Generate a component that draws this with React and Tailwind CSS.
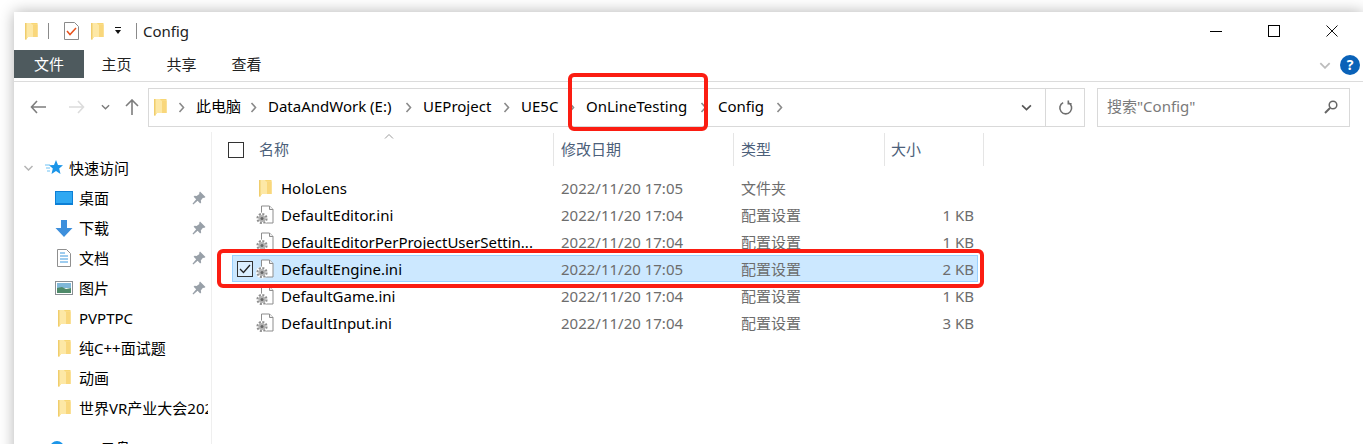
const FONT = "font-['Noto_Sans','Noto_Sans_CJK_SC',sans-serif]";

function Folder({ className = "w-[13px] h-[18px]" }) {
  return (
    <svg viewBox="0 0 13 18" className={`${className} shrink-0`}>
      <path d="M0 1h12.500v14H3l-2 2.500L0 17z" fill="#f8d775" />
      <path d="M0 1h6l1 1.500h5.500V15H3l-2 2.500-1-.5z" fill="#fde8a6" />
      <path d="M8 2.500h4.500V15H8z" fill="#f9d77c" />
      <path d="M0 1h1.500v16.500H0z" fill="#f0cd6c" />
    </svg>
  );
}

function ConfigFile() {
  return (
    <svg viewBox="0 0 18 20" className="w-[18px] h-[20px] shrink-0">
      <path d="M5.500 1h8l3.500 3.500V18H5.500z" fill="#fff" stroke="#8d8d8d" />
      <path d="M13.500 1v3.500H17" fill="#eee" stroke="#8d8d8d" />
      <circle cx="6" cy="13.500" r="6" fill="#fff" />
      <circle cx="6" cy="13.500" r="4.500" fill="none" stroke="#8f8f8f" strokeWidth="2.200" strokeDasharray="2 1.500" />
      <circle cx="6" cy="13.500" r="3.600" fill="#b2b2b2" />
      <circle cx="6" cy="13.500" r="1.500" fill="#666" />
    </svg>
  );
}

function Pin() {
  return (
    <svg viewBox="0 0 14 14" className="w-[14px] h-[14px] ml-auto mr-[5px] shrink-0">
      <path d="M8 .5L13.500 6l-1.500 1-1-.3-2.200 2.800.4 2-1 1-2.600-2.700L1.300 13.500.5 12.700l3.700-4.400L1.600 5.700l1-1 2 .4 2.800-2.200-.3-1z" fill="#98a0a8" />
    </svg>
  );
}

function Chevron({ className = "w-[7px] h-[11px]" }) {
  return (
    <svg viewBox="0 0 7 11" className={`${className} shrink-0`}>
      <path d="M1.500 1l4 4.500-4 4.500" fill="none" stroke="#8a8a8a" strokeWidth="1.600" />
    </svg>
  );
}

function Down({ className = "w-[10px] h-[6px]", color = "#7a7a7a" }) {
  return (
    <svg viewBox="0 0 10 6" className={`${className} shrink-0`}>
      <path d="M1 1l4 4 4-4" fill="none" stroke={color} strokeWidth="1.500" />
    </svg>
  );
}

function DesktopIcon() {
  return (
    <svg viewBox="0 0 18 14" className="w-[18px] h-[14px]">
      <rect x="0" y="0" width="18" height="14" fill="#0c7fd6" />
      <rect x="1" y="1" width="16" height="11" fill="#2fa8f2" />
    </svg>
  );
}

function DownloadIcon() {
  return (
    <svg viewBox="0 0 18 17" className="w-[18px] h-[17px]">
      <path d="M6 0h6v8h5.500L9 17 .5 8H6z" fill="#3d8fdc" />
    </svg>
  );
}

function DocIcon() {
  return (
    <svg viewBox="0 0 14 18" className="w-[14px] h-[18px]">
      <path d="M.5.500h9l4 4v13H.5z" fill="#fff" stroke="#8f8f8f" />
      <path d="M3 4h5M3 7h8M3 10h8M3 13h8" stroke="#3d9ae0" strokeWidth="1.200" />
    </svg>
  );
}

function PictureIcon() {
  return (
    <svg viewBox="0 0 18 14" className="w-[18px] h-[14px]">
      <rect x=".5" y=".5" width="17" height="13" fill="#fff" stroke="#8a8f94" />
      <rect x="2" y="2" width="14" height="5" fill="#7fb7d8" />
      <path d="M2 12V7l5-1 4 2 5-1v5z" fill="#4f8a6a" />
    </svg>
  );
}

function StarIcon() {
  return (
    <svg viewBox="0 0 18 16" className="w-[18px] h-[16px]">
      <path d="M11 0l2 5 5 .3-3.800 3.300 1.300 5.400L11 11l-4.500 3 1.300-5.400L4 5.300 9 5z" fill="#1b95e8" />
      <path d="M0 5h5M1 8h4M2 11h3" stroke="#6cc2f5" strokeWidth="1" />
    </svg>
  );
}

const quickLinks = [
  { label: "桌面", icon: <DesktopIcon />, pin: true },
  { label: "下载", icon: <DownloadIcon />, pin: true },
  { label: "文档", icon: <DocIcon />, pin: true },
  { label: "图片", icon: <PictureIcon />, pin: true },
  { label: "PVPTPC", icon: <Folder /> },
  { label: "纯C++面试题", icon: <Folder /> },
  { label: "动画", icon: <Folder /> },
  { label: "世界VR产业大会2022", icon: <Folder /> },
];

const files = [
  { name: "HoloLens", date: "2022/11/20 17:05", type: "文件夹", size: "", folder: true },
  { name: "DefaultEditor.ini", date: "2022/11/20 17:04", type: "配置设置", size: "1 KB" },
  { name: "DefaultEditorPerProjectUserSettin...", date: "2022/11/20 17:04", type: "配置设置", size: "1 KB" },
  { name: "DefaultEngine.ini", date: "2022/11/20 17:05", type: "配置设置", size: "2 KB", selected: true },
  { name: "DefaultGame.ini", date: "2022/11/20 17:04", type: "配置设置", size: "1 KB" },
  { name: "DefaultInput.ini", date: "2022/11/20 17:04", type: "配置设置", size: "3 KB" },
];

// cell widths keep the crumbs where the wider system font put them
const crumbs = [
  { label: "此电脑", width: "w-[72px]" },
  { label: "DataAndWork (E:)", width: "w-[155px]" },
  { label: "UEProject", width: "w-[98px]" },
  { label: "UE5C", width: "w-[65px]" },
  { label: "OnLineTesting", width: "w-[132px]" },
  { label: "Config", width: "w-[76px]" },
];

function Sidebar() {
  return (
    <div className="w-[198px] h-full shrink-0 border-r border-[#efefef] overflow-hidden">
      <div className="flex items-center h-[30px] mt-[21px] pl-[9px]">
        <Down className="w-[11px] h-[6px]" color="#b5b5b5" />
        <div className="ml-[11px] mr-[6px] flex"><StarIcon /></div>
        <span className="leading-normal">快速访问</span>
      </div>
      {quickLinks.map((item) => (
        <div key={item.label} className="flex items-center h-[30px]">
          <div className="w-[18px] ml-[41px] mr-[6px] flex justify-center shrink-0">{item.icon}</div>
          <span className="leading-normal whitespace-nowrap overflow-hidden max-w-[129px]">{item.label}</span>
          {item.pin && <Pin />}
        </div>
      ))}
      <div className="flex items-center h-[30px] mt-[10px] pl-[36px]">
        <div className="w-[14px] h-[14px] rounded-full bg-[#1b95e8] mr-[5px]" />
        <span className="leading-normal">WPS云盘</span>
      </div>
    </div>
  );
}

function HeaderCell({ className, children }) {
  return (
    <div className={`${className} h-[33px] shrink-0 border-r border-[#e5e5e5] flex items-center text-[#4c607a]`}>
      {children}
    </div>
  );
}

function FileRow({ file }) {
  const rowStyle = file.selected ? "bg-[#cce8ff] border-[#99d1ff]" : "border-transparent";
  return (
    <div className={`flex items-center h-[27px] w-[746px] border ${rowStyle}`}>
      <div className="w-[23px] flex justify-end shrink-0">
        {file.selected && (
          <div className="w-[16px] h-[16px] border border-[#333] bg-white/30 flex items-center justify-center mr-[3px]">
            <svg viewBox="0 0 12 10" className="w-[12px] h-[10px]">
              <path d="M1 5l3.500 3.500L11 1" fill="none" stroke="#222" strokeWidth="1.300" />
            </svg>
          </div>
        )}
      </div>
      <div className="w-[18px] flex justify-center shrink-0">
        {file.folder ? <Folder /> : <ConfigFile />}
      </div>
      <div className="w-[287px] pl-[7px] pt-[2px] shrink-0 whitespace-nowrap">{file.name}</div>
      <div className="w-[180px] pt-[2px] shrink-0 text-[#6d6d6d]">{file.date}</div>
      <div className="w-[150px] pt-[2px] shrink-0 text-[#6d6d6d]">{file.type}</div>
      <div className="w-[83px] pt-[2px] shrink-0 text-right text-[#6d6d6d]">{file.size}</div>
    </div>
  );
}

export default function App() {
  return (
    <div className={`${FONT} w-[1363px] h-[444px] overflow-hidden bg-white pl-[14px] pt-[12px] text-[15px] leading-none text-black`}>
      <div className="relative w-[1349px] h-[500px] bg-white shadow-[0_0_14px_rgba(0,0,0,0.3)]">
        {/* title bar */}
        <div className="flex items-center h-[38px] pl-[11px]">
          <Folder />
          <div className="w-px h-[16px] bg-[#8a8a8a] ml-[10px] mr-[15px]" />
          <svg viewBox="0 0 15 18" className="w-[15px] h-[18px]">
            <path d="M.5.500h10l4 4v13H.5z" fill="#fff" stroke="#8a8a8a" />
            <path d="M3 9l3 3.500L12 6" fill="none" stroke="#e8521c" strokeWidth="1.500" />
          </svg>
          <div className="ml-[12px]"><Folder /></div>
          <svg viewBox="0 0 8 8" className="w-[8px] h-[8px] ml-[10px]">
            <path d="M1 0h6v1H1zM1 3h6L4 7z" fill="#111" />
          </svg>
          <div className="w-px h-[16px] bg-[#8a8a8a] ml-[14px] mr-[6px]" />
          <span className="leading-normal text-[#222]">Config</span>
          <div className="ml-auto flex items-center pr-[25px]">
            <div className="w-[12px] h-px bg-black mr-[46px]" />
            <div className="w-[12px] h-[12px] border border-black mr-[46px]" />
            <svg viewBox="0 0 12 12" className="w-[12px] h-[12px]">
              <path d="M.5.500l11 11M11.500.500l-11 11" stroke="#111" strokeWidth="1" />
            </svg>
          </div>
        </div>

        {/* ribbon tabs */}
        <div className="flex items-start h-[32px] border-b border-[#dcdcdc]">
          <div className="w-[70px] h-[28px] bg-[#4e5a5e] text-white flex items-center justify-center">文件</div>
          <div className="w-[65px] h-[28px] flex items-center justify-center text-[#222]">主页</div>
          <div className="w-[65px] h-[28px] flex items-center justify-center text-[#222]">共享</div>
          <div className="w-[65px] h-[28px] flex items-center justify-center text-[#222]">查看</div>
          <div className="ml-auto flex items-center pr-[3px] pt-[5px]">
            <Down className="w-[12px] h-[7px] mr-[9px]" color="#bcbcbc" />
            <div className="w-[20px] h-[20px] rounded-full bg-[#0a62b8] text-white text-[14px] font-bold flex items-center justify-center">?</div>
          </div>
        </div>

        {/* address row */}
        <div className="flex items-center h-[40px] mt-[5px]">
          <div className="w-[134px] flex items-center shrink-0 pl-[16px]">
            <svg viewBox="0 0 16 14" className="w-[16px] h-[14px]">
              <path d="M7 1L1.500 7 7 13M1.500 7H16" fill="none" stroke="#7d7d7d" strokeWidth="1.600" />
            </svg>
            <svg viewBox="0 0 16 14" className="w-[16px] h-[14px] ml-[23px]">
              <path d="M9 1l5.500 6L9 13M14.500 7H0" fill="none" stroke="#dcdcdc" strokeWidth="1.600" />
            </svg>
            <Down className="w-[9px] h-[6px] ml-[16px]" />
            <svg viewBox="0 0 14 16" className="w-[14px] h-[16px] ml-[15px]">
              <path d="M1 7l6-6 6 6M7 1v15" fill="none" stroke="#7d7d7d" strokeWidth="1.600" />
            </svg>
          </div>
          <div className="w-[937px] h-[39px] border border-[#d9d9d9] flex items-center shrink-0">
            <div className="ml-[5px] mr-[11px] flex"><Folder /></div>
            {crumbs.map((crumb) => (
              <div key={crumb.label} className={`${crumb.width} shrink-0 flex items-center`}>
                <Chevron />
                <span className="ml-[11px] pb-[2px] leading-normal whitespace-nowrap">{crumb.label}</span>
              </div>
            ))}
            <Chevron />
            <div className="ml-auto w-[38px] flex justify-center"><Down className="w-[11px] h-[7px]" color="#555" /></div>
            <div className="w-[39px] h-full border-l border-[#d9d9d9] flex items-center justify-center">
              <svg viewBox="0 0 16 16" className="w-[15px] h-[15px]">
                <path d="M5.500 2.800a6.300 6.300 0 1 0 5.500 0M11 .5v3.500h3.500" fill="none" stroke="#6f6f6f" strokeWidth="1.700" />
              </svg>
            </div>
          </div>
          <div className="w-[253px] h-[39px] ml-[12px] border border-[#d9d9d9] flex items-center pl-[9px] pr-[11px] text-[#7a7a7a] shrink-0">
            <span className="pb-[2px] leading-normal">搜索"Config"</span>
            <svg viewBox="0 0 14 14" className="w-[14px] h-[14px] ml-auto">
              <circle cx="9" cy="5" r="3.800" fill="none" stroke="#666" strokeWidth="1.500" />
              <path d="M6 8l-5 5" stroke="#666" strokeWidth="2" />
            </svg>
          </div>
        </div>

        {/* body */}
        <div className="flex h-[400px] mt-[5px]">
          <Sidebar />
          <div className="flex-1">
            <div className="relative flex pl-[16px] pt-[1px] h-[34px]">
              <div className="w-[20px] flex items-center shrink-0 pt-[1px]">
                <div className="w-[16px] h-[16px] border border-[#333]" />
              </div>
              <HeaderCell className="w-[306px] pl-[11px]">名称</HeaderCell>
              <HeaderCell className="w-[180px] pl-[7px]">修改日期</HeaderCell>
              <HeaderCell className="w-[151px] pl-[7px]">类型</HeaderCell>
              <HeaderCell className="w-[99px] pl-[6px]">大小</HeaderCell>
              <svg viewBox="0 0 10 5" className="absolute left-[172px] top-[2px] w-[10px] h-[5px]">
                <path d="M1 4.500l4-4 4 4" fill="none" stroke="#9a9a9a" />
              </svg>
            </div>
            <div className="pl-[20px] pt-[8px]">
              {files.map((file) => (
                <FileRow key={file.name} file={file} />
              ))}
            </div>
          </div>
        </div>

        {/* red annotation boxes */}
        <div className="absolute left-[554px] top-[61px] w-[140px] h-[58px] border-[4px] border-[#fb1d12] rounded-[6px]" />
        <div className="absolute left-[203px] top-[237px] w-[767px] h-[39px] border-[4px] border-[#fb1d12] rounded-[6px]" />
      </div>
    </div>
  );
}
